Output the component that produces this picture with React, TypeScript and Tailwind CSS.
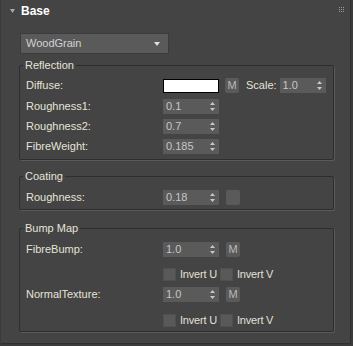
import React from "react";

const font = { fontFamily: '"Liberation Sans", Arial, sans-serif' };

function Spinner({ value, width = "w-[56px]" }: { value: string; width?: string }) {
  return (
    <div
      className={`${width} h-[15px] bg-[#5a5a5a] flex items-center justify-between pl-[3px] pr-[4px] text-[11px] text-[#c6c6c6]`}
    >
      <span>{value}</span>
      <svg width="5" height="9" viewBox="0 0 5 9">
        <path d="M2.5 0 L5 3 L0 3 Z" fill="#c8c8c8" />
        <path d="M0 6 L5 6 L2.5 9 Z" fill="#c8c8c8" />
      </svg>
    </div>
  );
}

function MButton({ label = "M" }: { label?: string }) {
  return (
    <div className="w-[14px] h-[15px] bg-[#5a5a5a] rounded-[2px] flex items-center justify-center text-[11px] text-[#b9b9b9]">
      {label}
    </div>
  );
}

function Check({ label }: { label: string }) {
  return (
    <div className="flex items-center">
      <div className="w-[13px] h-[13px] bg-[#595959] border border-[#505050]" />
      <span className="ml-[4px] text-[11px] text-[#e2e0d6] tracking-[-0.2px]">{label}</span>
    </div>
  );
}

function Row({ label, h = "h-[20px]", children }: { label?: string; h?: string; children?: React.ReactNode }) {
  return (
    <div className={`${h} flex items-center`}>
      <div className="w-[143px] pl-[6px] text-[11px] text-[#e6e3d8]">{label}</div>
      <div className="flex items-center">{children}</div>
    </div>
  );
}

function Group({ title, className, children }: { title: string; className?: string; children: React.ReactNode }) {
  return (
    <fieldset
      className={`ml-[18px] w-[315px] border border-[#2e2e2e] rounded-[2px] shadow-[1px_1px_0_#5a5a5a] ${className ?? ""}`}
    >
      <legend className="ml-[3px] px-[2px] h-[14px] leading-[14px] text-[11px] text-[#e6e3d8]">{title}</legend>
      {children}
    </fieldset>
  );
}

export default function App() {
  return (
    <div className="w-[353px] h-[346px] bg-[#3b3b3b]" style={font}>
      <div className="relative ml-[1px] w-[350px] h-[344px] bg-[#444444] border-r border-b border-[#2f2f2f]">
        {/* header */}
        <div className="h-[22px] flex items-center">
          <svg className="ml-[9px]" width="5" height="4" viewBox="0 0 5 4">
            <path d="M0 0 L5 0 L2.5 4 Z" fill="#a8a8a8" />
          </svg>
          <span className="ml-[6px] text-[12px] font-bold text-white">Base</span>
        </div>
        <div className="absolute right-[6px] top-[7px] grid grid-cols-3 gap-[1px]">
          {Array.from({ length: 9 }).map((_, i) => (
            <div key={i} className="w-[1px] h-[1px] bg-[#9a9a9a]" />
          ))}
        </div>

        {/* material dropdown */}
        <div className="mt-[11px] ml-[19px] w-[149px] h-[21px] bg-[#5a5a5a] border border-[#3c3c3c] flex items-center justify-between pl-[5px] pr-[8px]">
          <span className="text-[11px] text-[#d2d2d2]">WoodGrain</span>
          <svg width="6" height="4" viewBox="0 0 6 4">
            <path d="M0 0 L6 0 L3 4 Z" fill="#e0e0e0" />
          </svg>
        </div>

        <Group title="Reflection" className="mt-[4px] pt-[3px] pb-[3px]">
          <Row label="Diffuse:" h="h-[21px]">
            <div className="w-[56px] h-[14px] bg-white border border-black" />
            <div className="ml-[6px]">
              <MButton />
            </div>
            <span className="ml-[7px] text-[11px] text-[#e6e3d8]">Scale:</span>
            <div className="ml-[3px]">
              <Spinner value="1.0" width="w-[46px]" />
            </div>
          </Row>
          <Row label="Roughness1:">
            <Spinner value="0.1" />
          </Row>
          <Row label="Roughness2:">
            <Spinner value="0.7" />
          </Row>
          <Row label="FibreWeight:">
            <Spinner value="0.185" />
          </Row>
        </Group>

        <Group title="Coating" className="mt-[9px] pt-[4px] pb-[2px]">
          <Row label="Roughness:">
            <Spinner value="0.18" />
            <div className="ml-[7px]">
              <MButton label="" />
            </div>
          </Row>
        </Group>

        <Group title="Bump Map" className="mt-[11px] pt-[4px] pb-[1px]">
          <Row label="FibreBump:">
            <Spinner value="1.0" />
            <div className="ml-[7px]">
              <MButton />
            </div>
          </Row>
          <Row h="h-[25px] pt-[5px]">
            <Check label="Invert U" />
            <div className="ml-[3px]">
              <Check label="Invert V" />
            </div>
          </Row>
          <Row label="NormalTexture:">
            <Spinner value="1.0" />
            <div className="ml-[7px]">
              <MButton />
            </div>
          </Row>
          <Row h="h-[26px] pt-[6px]">
            <Check label="Invert U" />
            <div className="ml-[3px]">
              <Check label="Invert V" />
            </div>
          </Row>
        </Group>
      </div>
    </div>
  );
}
